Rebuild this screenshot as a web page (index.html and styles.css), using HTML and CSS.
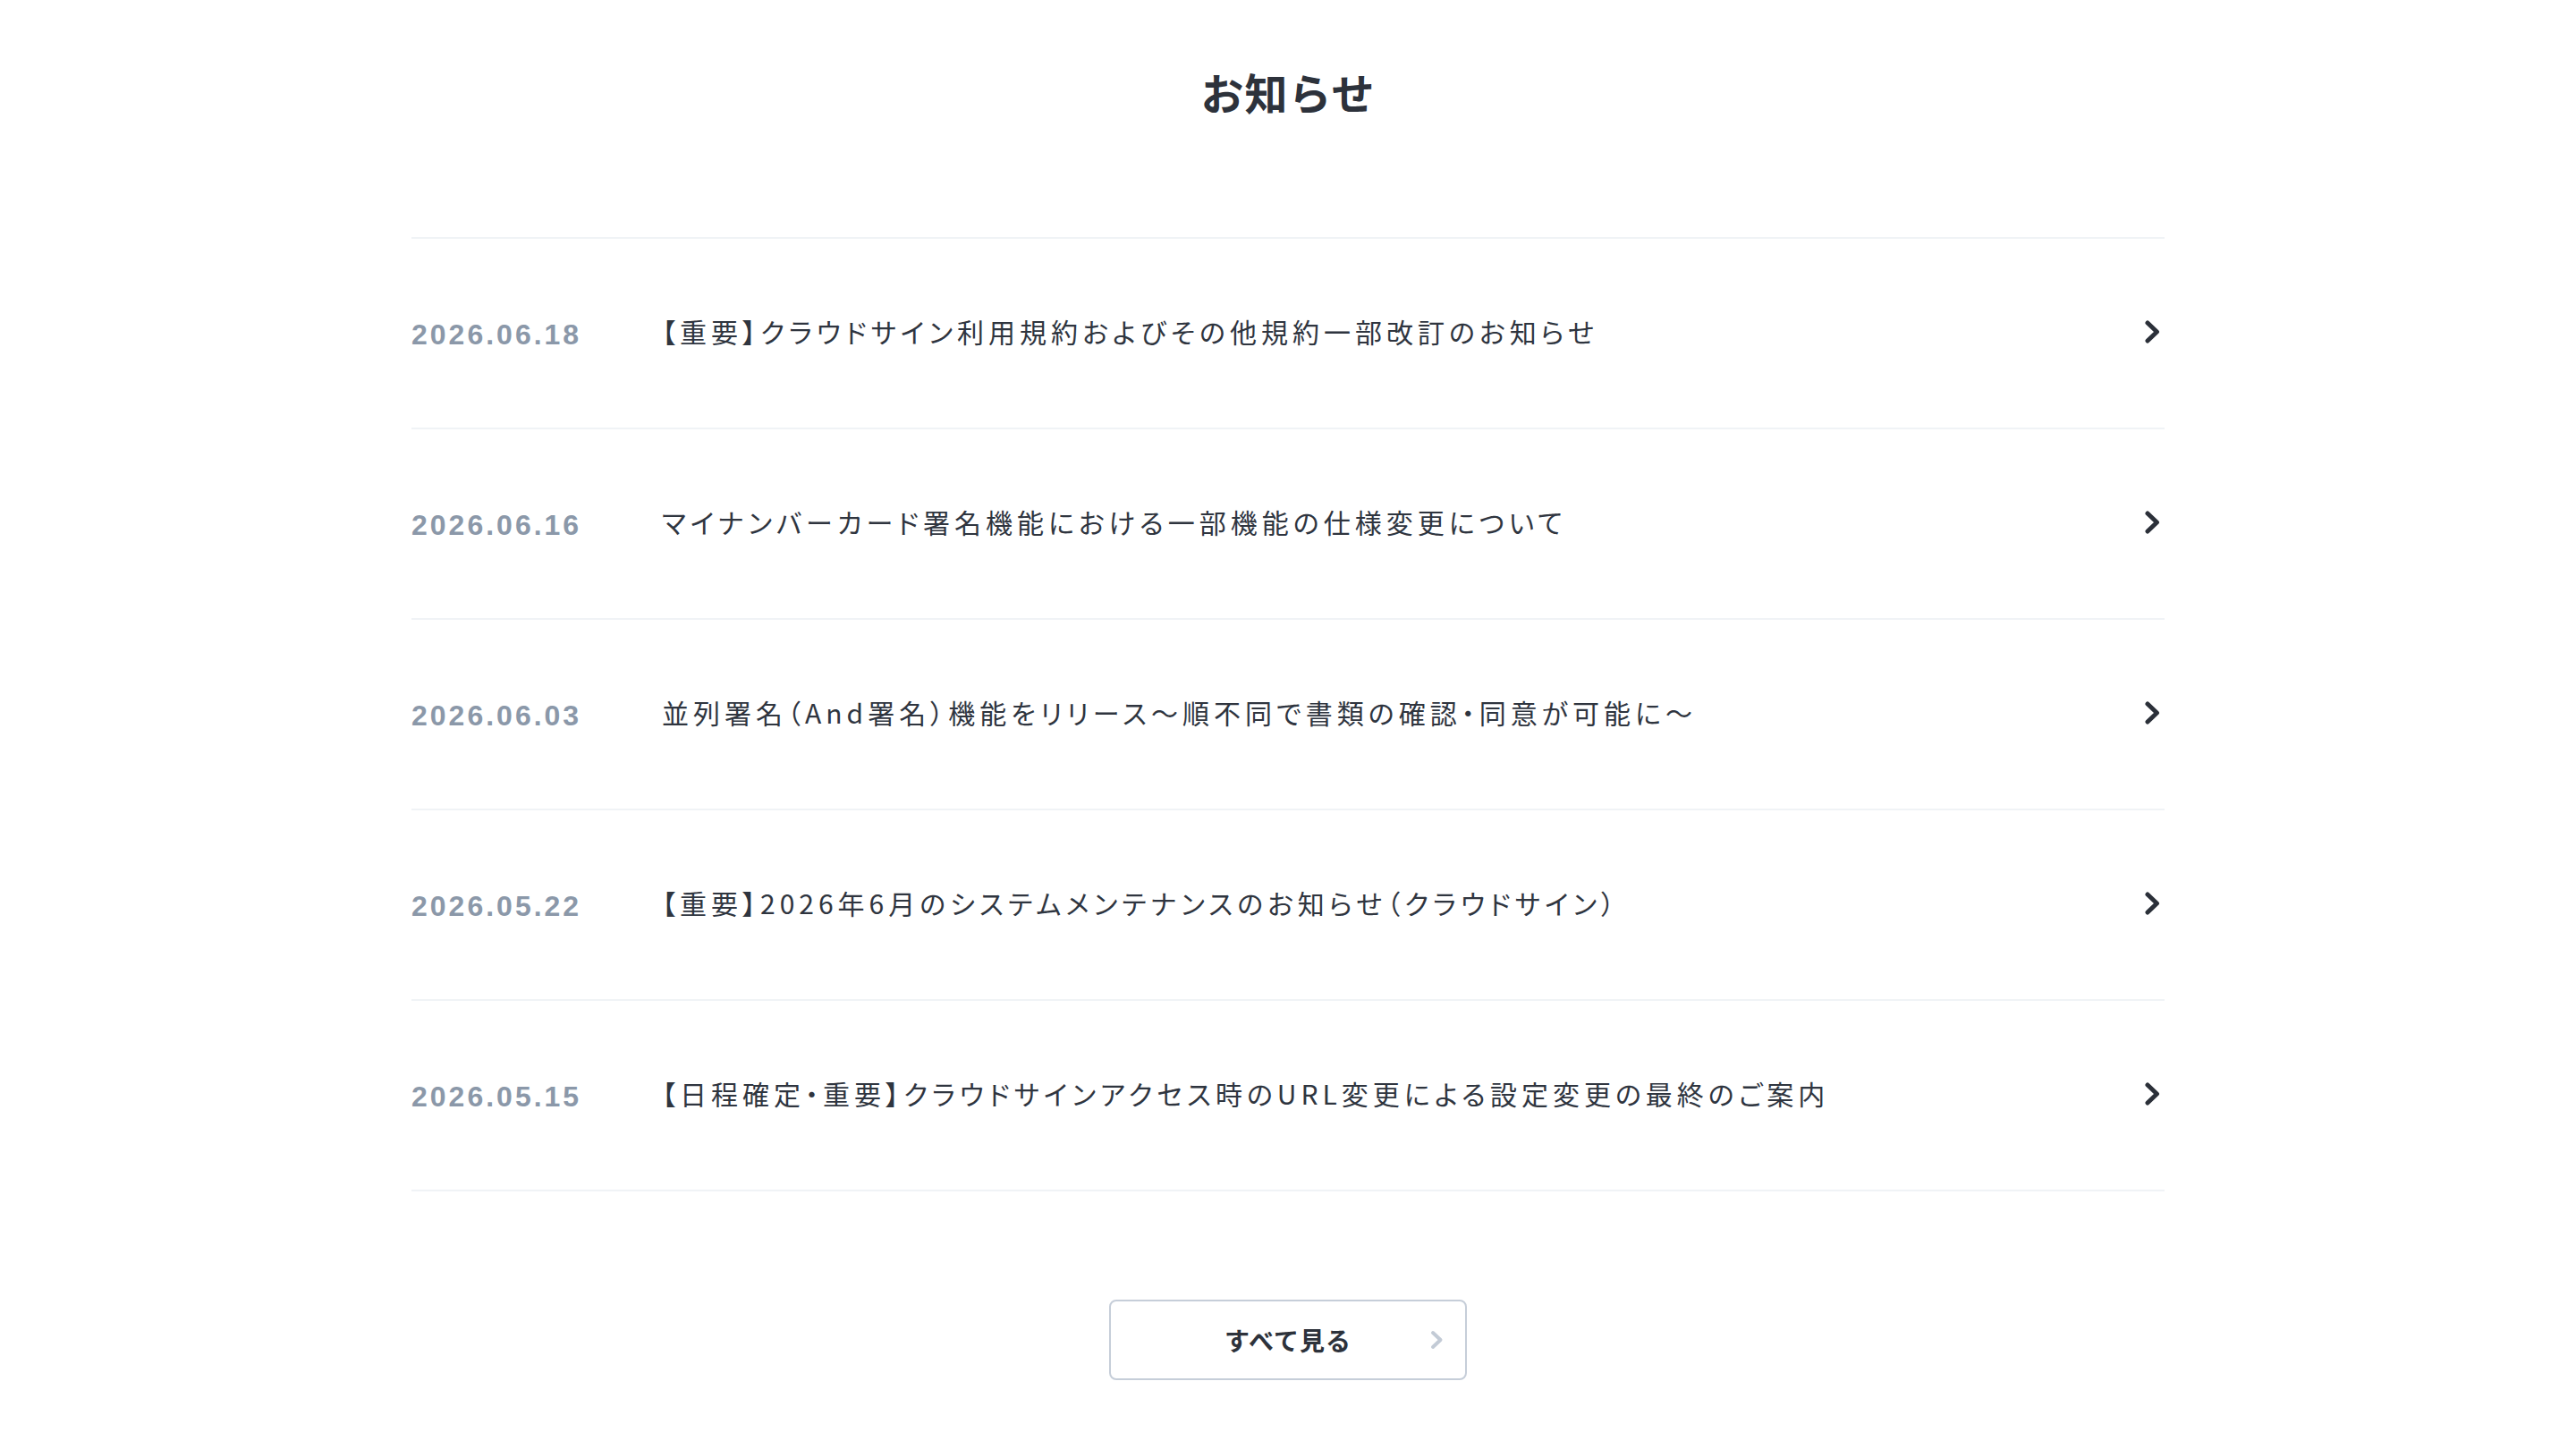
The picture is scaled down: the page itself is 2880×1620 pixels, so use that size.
FILE: index.html
```html
<!DOCTYPE html>
<html lang="ja">
<head>
<meta charset="utf-8">
<title>お知らせ</title>
<link rel="stylesheet" href="styles.css">
</head>
<body>
<section class="news">
  <h2 class="news-title">お知らせ</h2>
  <ul class="news-list">
    <li class="news-item">
      <a class="news-link" href="#">
        <time class="news-date">2026.06.18</time>
        <span class="news-text">【重要】クラウドサイン利用規約およびその他規約一部改訂のお知らせ</span>
        <svg class="news-arrow" viewBox="0 0 17 26" aria-hidden="true"><path d="M3 3 L13.5 13 L3 23"/></svg>
      </a>
    </li>
    <li class="news-item">
      <a class="news-link" href="#">
        <time class="news-date">2026.06.16</time>
        <span class="news-text">マイナンバーカード署名機能における一部機能の仕様変更について</span>
        <svg class="news-arrow" viewBox="0 0 17 26" aria-hidden="true"><path d="M3 3 L13.5 13 L3 23"/></svg>
      </a>
    </li>
    <li class="news-item">
      <a class="news-link" href="#">
        <time class="news-date">2026.06.03</time>
        <span class="news-text">並列署名（And署名）機能をリリース〜順不同で書類の確認・同意が可能に〜</span>
        <svg class="news-arrow" viewBox="0 0 17 26" aria-hidden="true"><path d="M3 3 L13.5 13 L3 23"/></svg>
      </a>
    </li>
    <li class="news-item">
      <a class="news-link" href="#">
        <time class="news-date">2026.05.22</time>
        <span class="news-text">【重要】2026年6月のシステムメンテナンスのお知らせ（クラウドサイン）</span>
        <svg class="news-arrow" viewBox="0 0 17 26" aria-hidden="true"><path d="M3 3 L13.5 13 L3 23"/></svg>
      </a>
    </li>
    <li class="news-item">
      <a class="news-link" href="#">
        <time class="news-date">2026.05.15</time>
        <span class="news-text">【日程確定・重要】クラウドサインアクセス時のURL変更による設定変更の最終のご案内</span>
        <svg class="news-arrow" viewBox="0 0 17 26" aria-hidden="true"><path d="M3 3 L13.5 13 L3 23"/></svg>
      </a>
    </li>
  </ul>
  <div class="news-more">
    <a class="more-btn" href="#">
      <span class="more-spacer"></span>
      <span class="more-label">すべて見る</span>
      <span class="more-icon"><svg viewBox="0 0 15 22" aria-hidden="true"><path d="M3 3 L11.5 11 L3 19"/></svg></span>
    </a>
  </div>
</section>
</body>
</html>
```

FILE: styles.css
```css
html, body {
  margin: 0;
  padding: 0;
  background: #ffffff;
}

body {
  font-family: "Noto Sans CJK JP", "Noto Sans", sans-serif;
  color: #2f353f;
}

.news {
  width: 1960px;
  margin: 0 auto;
  padding-top: 66px;
}

.news-title {
  margin: 0;
  font-size: 48px;
  line-height: 72px;
  font-weight: 700;
  text-align: center;
  color: #2d323b;
  letter-spacing: 1px;
}

.news-list {
  list-style: none;
  margin: 127px 0 0;
  padding: 0;
  border-top: 2px solid #f0f3f6;
}

.news-item {
  border-bottom: 2px solid #f0f3f6;
}

.news-link {
  display: flex;
  align-items: center;
  height: 211px;
  text-decoration: none;
  color: inherit;
}

.news-date {
  flex: 0 0 280px;
  font-family: "Liberation Sans", Arial, sans-serif;
  font-weight: 700;
  font-size: 32px;
  letter-spacing: 3px;
  color: #8b98a9;
  padding-top: 4px;
}

.news-text {
  flex: 1 1 auto;
  font-size: 30px;
  line-height: 1.5;
  letter-spacing: 5px;
  font-feature-settings: "palt";
  color: #2f353f;
  padding-bottom: 4px;
}

.news-arrow {
  flex: 0 0 17px;
  width: 17px;
  height: 26px;
  margin-right: 5px;
  margin-bottom: 4px;
  fill: none;
  stroke: #2b3039;
  stroke-width: 5;
  stroke-linecap: round;
  stroke-linejoin: round;
}

.news-more {
  display: flex;
  justify-content: center;
  padding-top: 121px;
  padding-bottom: 74px;
}

.more-btn {
  display: grid;
  grid-template-columns: 1fr auto 1fr;
  align-items: center;
  box-sizing: border-box;
  width: 400px;
  height: 90px;
  border: 2px solid #c6ced9;
  border-radius: 8px;
  text-decoration: none;
  background: #ffffff;
}

.more-label {
  font-size: 28px;
  font-weight: 700;
  color: #2d323b;
  letter-spacing: 1px;
}

.more-icon {
  display: flex;
  justify-content: flex-end;
  padding-right: 24px;
}

.more-icon svg {
  width: 15px;
  height: 22px;
  fill: none;
  stroke: #c3cbd6;
  stroke-width: 4;
  stroke-linecap: round;
  stroke-linejoin: round;
}
```
